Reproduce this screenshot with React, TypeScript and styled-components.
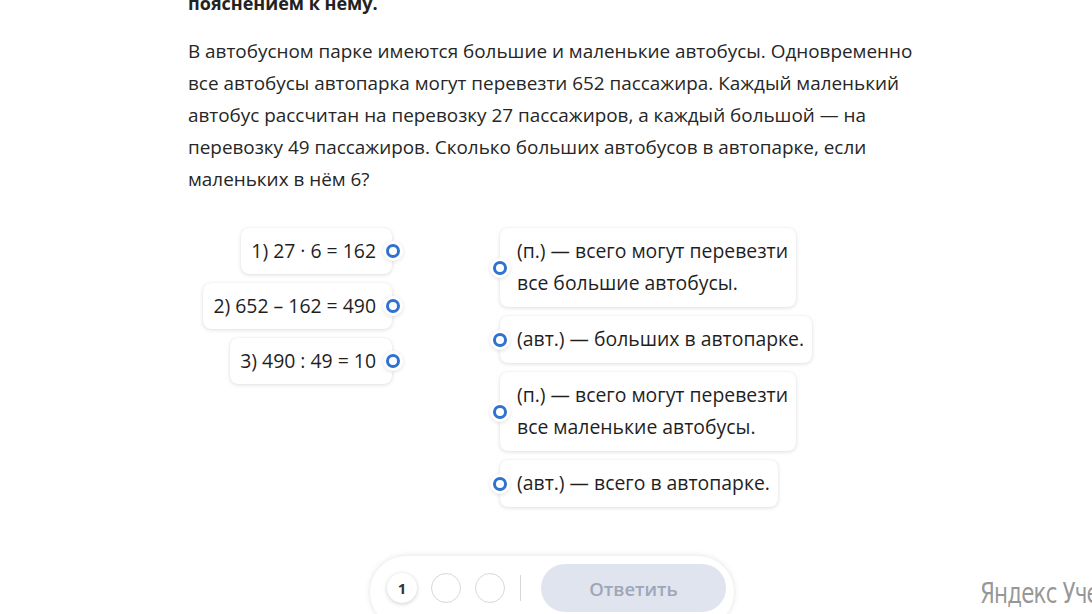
import React from "react";
import styled, { createGlobalStyle } from "styled-components";

const Global = createGlobalStyle`
  html, body { margin: 0; padding: 0; background: #fff; }
  body { font-family: "Open Sans", "Noto Sans", sans-serif; color: #222; overflow: hidden; }
  #root { width: 1092px; height: 614px; overflow: hidden; position: relative; }
`;

const Page = styled.div`
  width: 1092px;
  height: 614px;
  display: flex;
  flex-direction: column;
  padding-left: 188px;
  box-sizing: border-box;
`;

const Heading = styled.div`
  font-size: 18px;
  font-weight: 700;
  line-height: 24px;
  margin-top: -9px;
  color: #222;
`;

const Paragraph = styled.p`
  margin: 20px 0 0;
  font-size: 18.9px;
  line-height: 32px;
  color: #262626;
  white-space: nowrap;
`;

const Line = styled.span`
  display: block;
`;

const Matching = styled.div`
  display: flex;
  margin-top: 33px;
`;

const LeftCol = styled.div`
  width: 204px;
  display: flex;
  flex-direction: column;
  align-items: flex-end;
  gap: 9px;
`;

const RightCol = styled.div`
  margin-left: 108px;
  display: flex;
  flex-direction: column;
  align-items: flex-start;
  gap: 9px;
`;

const Card = styled.div<{ $side: "left" | "right" }>`
  position: relative;
  background: #fff;
  border-radius: 8px;
  box-shadow: 0 1px 4px rgba(0, 0, 0, 0.13), 0 0 1px rgba(0, 0, 0, 0.08);
  font-size: 19.4px;
  line-height: 32px;
  color: #1f1f1f;
  padding: ${(p) => (p.$side === "left" ? "7px 16px 7px 10px" : "7px 8px 8px 17px")};
  white-space: nowrap;
`;

const Dot = styled.span<{ $side: "left" | "right" }>`
  position: absolute;
  top: 50%;
  ${(p) => (p.$side === "left" ? "right: -8px;" : "left: -7px;")}
  transform: translateY(-50%);
  width: 8px;
  height: 8px;
  border-radius: 50%;
  border: 3px solid #2f72cf;
  background: #fff;
  box-shadow: 0 0 0 3px #fff, 0 1px 4px 3px rgba(0, 0, 0, 0.12);
  box-sizing: content-box;
`;

const Footer = styled.div`
  margin-top: auto;
  margin-left: -188px;
  width: 1092px;
  display: flex;
`;

const Bar = styled.div`
  margin-left: 370px;
  width: 364px;
  height: 72px;
  margin-bottom: -14px;
  box-sizing: border-box;
  border-radius: 36px;
  background: #fff;
  box-shadow: 0 0 6px rgba(0, 0, 0, 0.12);
  display: flex;
  align-items: flex-start;
  padding: 8px 8px 0 17px;
`;

const Steps = styled.div`
  display: flex;
  align-items: center;
  gap: 14px;
  height: 48px;
`;

const Step = styled.div<{ $active?: boolean }>`
  width: 30px;
  height: 30px;
  border-radius: 50%;
  box-sizing: border-box;
  border: ${(p) => (p.$active ? "none" : "1px solid #d6d8dc")};
  box-shadow: ${(p) => (p.$active ? "0 1px 4px rgba(0,0,0,0.2)" : "none")};
  display: flex;
  align-items: center;
  justify-content: center;
  font-size: 15px;
  font-weight: 700;
  color: #333;
  background: #fff;
`;

const Divider = styled.div`
  width: 1px;
  height: 26px;
  background: #d8d8d8;
  margin: 11px 20px 0 15px;
`;

const AnswerButton = styled.button`
  width: 185px;
  height: 48px;
  border: none;
  border-radius: 24px;
  background: #dfe4ee;
  color: #9ea6b7;
  font-family: "Open Sans", "Noto Sans", sans-serif;
  font-size: 18.5px;
  font-weight: 600;
`;

const Watermark = styled.div`
  position: absolute;
  left: 980px;
  top: 576px;
  font-family: "DejaVu Sans Condensed", "Liberation Sans", sans-serif;
  font-size: 29px;
  color: rgba(80, 80, 80, 0.6);
  white-space: nowrap;
  letter-spacing: -1px;
  transform: scaleX(0.82);
  transform-origin: left top;
`;

const paragraphLines = [
  "В автобусном парке имеются большие и маленькие автобусы. Одновременно",
  "все автобусы автопарка могут перевезти 652 пассажира. Каждый маленький",
  "автобус рассчитан на перевозку 27 пассажиров, а каждый большой — на",
  "перевозку 49 пассажиров. Сколько больших автобусов в автопарке, если",
  "маленьких в нём 6?",
];

const leftItems = ["1) 27 · 6 = 162", "2) 652 – 162 = 490", "3) 490 : 49 = 10"];
const rightItems = [
  ["(п.) — всего могут перевезти", "все большие автобусы."],
  ["(авт.) — больших в автопарке."],
  ["(п.) — всего могут перевезти", "все маленькие автобусы."],
  ["(авт.) — всего в автопарке."],
];

export default function App() {
  return (
    <>
      <Global />
      <Page>
        <Heading>пояснением к нему.</Heading>
        <Paragraph>
          {paragraphLines.map((l) => (
            <Line key={l}>{l}</Line>
          ))}
        </Paragraph>
        <Matching>
          <LeftCol>
            {leftItems.map((t) => (
              <Card $side="left" key={t}>
                {t}
                <Dot $side="left" />
              </Card>
            ))}
          </LeftCol>
          <RightCol>
            {rightItems.map((lines, i) => (
              <Card $side="right" key={i}>
                {lines.map((l, j) => (
                  <Line key={j}>{l}</Line>
                ))}
                <Dot $side="right" />
              </Card>
            ))}
          </RightCol>
        </Matching>
        <Footer>
          <Bar>
            <Steps>
              <Step $active>1</Step>
              <Step />
              <Step />
            </Steps>
            <Divider />
            <AnswerButton>Ответить</AnswerButton>
          </Bar>
        </Footer>
      </Page>
      <Watermark>Яндекс Уче</Watermark>
    </>
  );
}
